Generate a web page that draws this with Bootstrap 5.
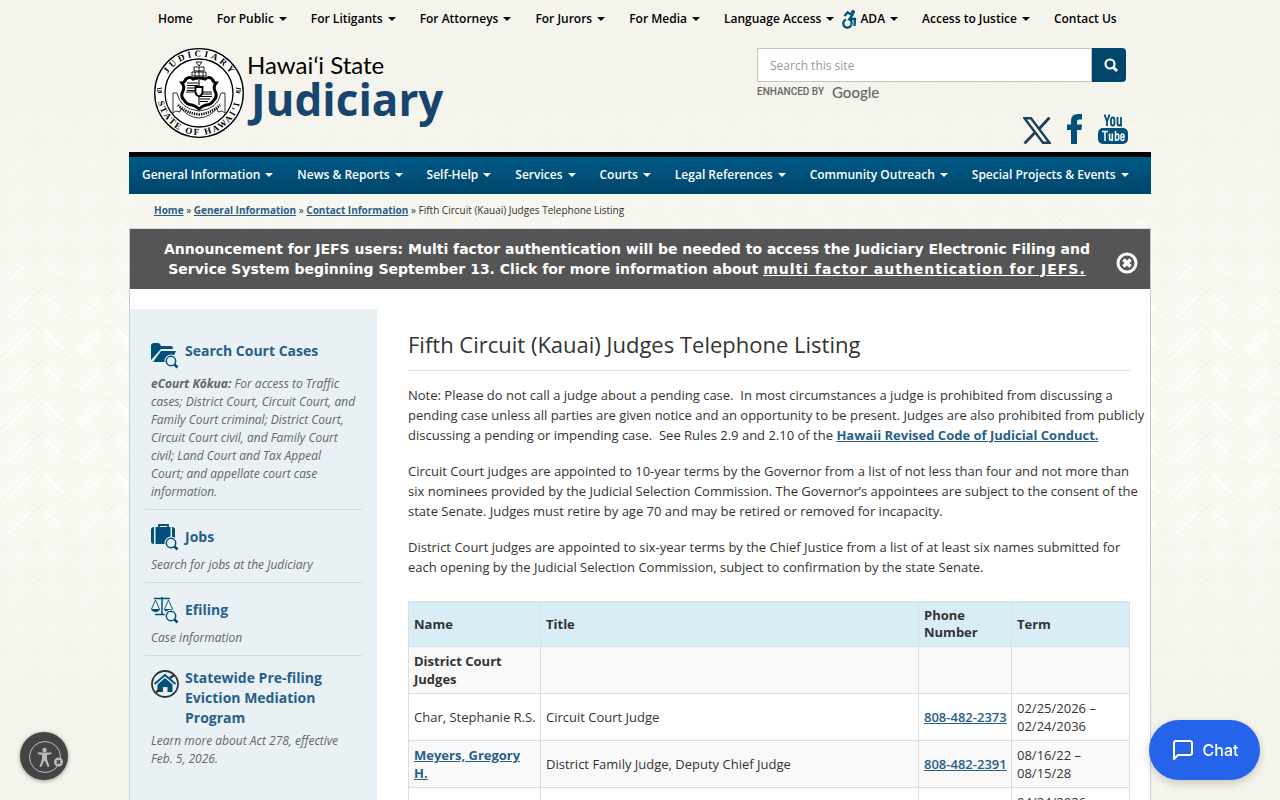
<!DOCTYPE html>
<html lang="en">
<head>
<meta charset="utf-8">
<meta name="viewport" content="width=device-width, initial-scale=1">
<title>Fifth Circuit (Kauai) Judges Telephone Listing</title>
<link href="https://cdn.jsdelivr.net/npm/bootstrap@5.3.0/dist/css/bootstrap.min.css" rel="stylesheet">
<style>
  body { background: #f5f4ec; color: #333; font-family: "Open Sans", sans-serif; font-size: 13px; line-height: 20px; overflow-x: hidden; }
  a { color: #285e8a; }
  .weave { position: absolute; inset: 0 0 auto 0; width: 100%; height: 740px; z-index: -1; }
  .site { max-width: 1022px; }
  .menu-top .nav { padding-left: 17px; }
  .menu-top .nav-link, .menu-main .nav-link { font-size: 12px; font-weight: 600; line-height: 20px; padding: 9px 12px; white-space: nowrap; }
  .menu-top .nav-link { color: #000; }
  .menu-top .with-icon { padding-left: 0; display: flex; gap: 3px; }
  .menu-main { background: linear-gradient(#005a87, #00456a); border-top: 5px solid #000; padding-left: 1px; }
  .menu-main .nav-link { color: #fff; padding: 8px 12px 9px; }
  .dropdown-toggle::after { border-top: 4px solid; border-left: 4px solid transparent; border-right: 4px solid transparent; margin-left: 5px; vertical-align: 2px; }
  .masthead { padding: 0 23px 8px 24px; }
  .logo-link { gap: 2px; padding-top: 9px; }
  .logo-state { font: 400 24px/24px Lato, sans-serif; color: #000; margin-top: 6px; }
  .logo-name { font: 700 44px/44px "Open Sans", sans-serif; color: #17456d; }
  .search-col { width: 371px; padding-top: 10px; }
  .search-col form { padding-right: 2px; }
  .search-col .form-control { height: 34px; font-size: 12px; border: 1px solid #c5c5c0; border-radius: 0; padding: 6px 12px; }
  .search-col .form-control::placeholder { color: #999; }
  .btn-find { width: 34px; height: 34px; background: #00456a; color: #fff; border-radius: 0 4px 4px 0; }
  .enhanced { font: 500 10px/20px Roboto, sans-serif; color: #666; gap: 8px; }
  .enhanced b { font: 500 15px/20px Lato, sans-serif; }
  .social { margin-top: 12px; gap: 16px; }
  .crumbs { font-size: 10px; line-height: 16px; padding: 8px 25px 10px; }
  .crumbs a { font-weight: 700; }
  .panel-main { background: #fff; border: 1px solid #c8ccce; border-top-color: #ddd; }
  .notice { background: #555; color: #fff; font: 700 14px/20px "DejaVu Sans", sans-serif; padding: 10px 12px 10px 8px; }
  .notice a { color: #fff; letter-spacing: 1px; }
  .notice svg { margin-top: 8px; }
  .aside-col { width: 247px; background: #e9f1f5; padding: 20px 15px 40px; }
  .topic { border-bottom: 1px solid #d5dadd; padding: 12px 6px 8px; }
  .topic:last-child { border-bottom: 0; }
  .topic h2 { font-size: 14px; line-height: 20px; font-weight: 700; margin: 0; }
  .topic h2 a { text-decoration: none; }
  .topic p { font-size: 12px; line-height: 18px; font-style: italic; color: #666; margin: 4px 0 0; }
  .topic svg { margin-top: 2px; }
  .article { padding: 19px 20px 20px 31px; }
  .article h1 { font-size: 22px; line-height: 32px; font-weight: 400; padding-bottom: 10px; border-bottom: 1px solid #ddd; margin-bottom: 14px; }
  .article p { margin: 0 -16px 16px 0; }
  .article a { font-weight: 700; }
  .judges { font-size: 13px; line-height: 18px; margin-top: 24px; --bs-table-striped-bg: #f9f9f9; --bs-table-striped-color: #333; border-color: #ddd; table-layout: fixed; }
  .judges > :not(caption) > * > * { padding: 5px; color: #333; }
  .judges > thead > tr > th { background: #d9edf7; line-height: 17px; vertical-align: middle; }
  .judges .tel { font-weight: 600; white-space: nowrap; }
  .w-name { width: 132px; } .w-phone { width: 93px; } .w-term { width: 118px; }
  .btn-access { left: 20px; bottom: 20px; width: 48px; height: 48px; background: #444; box-shadow: 0 1px 4px #0006; }
  .btn-chat { right: 20px; bottom: 20px; height: 60px; width: 111px; background: #2563eb; color: #fff; font: 500 16px/24px Inter, sans-serif; box-shadow: 0 3px 8px #0003; z-index: 5; }
</style>
</head>
<body>
<svg class="weave" aria-hidden="true">
  <defs>
    <linearGradient id="fade" x1="0" y1="0" x2="0" y2="1"><stop offset=".1" stop-color="#000"/><stop offset=".45" stop-color="#fff"/><stop offset=".65" stop-color="#fff"/><stop offset=".96" stop-color="#000"/></linearGradient>
    <mask id="fader"><rect width="100%" height="740" fill="url(#fade)"/></mask>
    <filter id="soft" x="-50%" y="-50%" width="200%" height="200%"><feGaussianBlur stdDeviation="2.500"/></filter>
    <pattern id="plait" width="73" height="36" patternUnits="userSpaceOnUse">
      <rect width="73" height="36" fill="#fbfbf6" opacity=".5"/>
      <g stroke="#fefffc" stroke-width="12" opacity=".75" filter="url(#soft)"><path d="M7 31L28 8M45 5l15 20M7 67L28 44M45 41l15 20M7-5L28-28M45-31l15 20"/></g>
      <g stroke="#e9e8e0" fill="none" opacity=".55"><path d="M-2 36L34 0M2 40L42 0M34 0l36 36M40-3l36 36"/></g>
    </pattern>
  </defs>
  <rect width="100%" height="740" fill="url(#plait)" mask="url(#fader)"/>
</svg>
<div class="site mx-auto">
  <header>
    <nav class="menu-top" aria-label="Audience">
      <ul class="nav flex-lg-nowrap">
        <li class="nav-item"><a class="nav-link" href="#">Home</a></li>
        <li class="nav-item"><a class="nav-link dropdown-toggle" href="#">For Public</a></li>
        <li class="nav-item"><a class="nav-link dropdown-toggle" href="#">For Litigants</a></li>
        <li class="nav-item"><a class="nav-link dropdown-toggle" href="#">For Attorneys</a></li>
        <li class="nav-item"><a class="nav-link dropdown-toggle" href="#">For Jurors</a></li>
        <li class="nav-item"><a class="nav-link dropdown-toggle" href="#">For Media</a></li>
        <li class="nav-item"><a class="nav-link dropdown-toggle pe-2" href="#">Language Access</a></li>
        <li class="nav-item"><a class="nav-link with-icon" href="#"><svg width="15" height="20" viewBox="0 0 15 20" fill="none" stroke="#00507a" stroke-width="2.300"><circle cx="11" cy="3" r="2" fill="#00507a" stroke="none"/><path d="M2.500 7l3-3.500 5 2.500-3 4H13l-.5 7M9.500 15.500A4.200 4.200 0 1 1 4 10.500"/><path d="M7 9.500q3 2 2.500 6"/></svg><span class="dropdown-toggle">ADA</span></a></li>
        <li class="nav-item"><a class="nav-link dropdown-toggle" href="#">Access to Justice</a></li>
        <li class="nav-item"><a class="nav-link" href="#">Contact Us</a></li>
      </ul>
    </nav>
    <div class="masthead d-flex flex-wrap justify-content-between">
      <a class="logo-link d-flex text-decoration-none" href="#">
        <svg width="92" height="92" viewBox="0 0 92 92" role="img" aria-label="Seal">
          <defs><path id="arcTop" d="M9.500 46a36.500 36.500 0 0 1 73 0"/><path id="arcLow" d="M4 46a42 42 0 0 0 84 0"/></defs>
          <circle cx="46" cy="46" r="44.300" fill="#fff" stroke="#000" stroke-width="1.300"/>
          <circle cx="46" cy="46" r="34" fill="#fff" stroke="#000" stroke-width="1.300"/>
          <g font-family="Liberation Serif, serif" font-weight="700" font-size="9" text-anchor="middle" fill="#000">
            <text letter-spacing="3"><textPath href="#arcTop" startOffset="51%">JUDICIARY</textPath></text>
            <text letter-spacing="2"><textPath href="#arcLow" startOffset="50%">STATE OF HAWAI‘I</textPath></text>
          </g>
          <path d="M4 42l5-1M4 44h5M5 46l4-1M83 41l5 1M83 44h5M83 45l4 1" stroke="#000"/>
          <g fill="none" stroke="#000">
            <path d="M43 15h6l-3 4zM41 20h10v4H41zM39 25h14M42 25v6M46 20v11M50 25v6M39 25v4h14v-4" stroke-width=".9"/>
            <path d="M33 32q4-3 7 0 6-2 12 0 4-3 7 0 2 4 4 4-3 4-1 8 3 5-1 9-3 5-8 5-4 1-7 4-3-3-7-4-5 0-8-5-4-4-1-9 2-4-1-8 2 0 4-4z" fill="#fff" stroke-width="3"/>
            <path d="M34 36h11M34 38.500h11M34 41h8M34 43.500h8M47 47h12M47 49.500h12M47 52h10M47 54.500h8M46 33v25M33 45h26" stroke-width="1.100"/>
            <path d="M42.500 40h7v5q0 3-3.500 4.500Q42.500 48 42.500 45z" fill="#fff" stroke-width="1.800"/>
            <path d="M20 46h4q3 16 22 18 19-2 22-18h4v20l-3-2-4 1-1-4Q58 70 46 71 34 70 28 61l-1 4-4-1-3 2z" stroke-width=".8"/>
            <path d="M25 58q8 8 21 9.500Q59 66 67 58" stroke-width="2.600" stroke-dasharray="1.300 1"/>
          </g>
        </svg>
        <span class="d-flex flex-column"><span class="logo-state">Hawaiʻi State</span><span class="logo-name ms-1">Judiciary</span></span>
      </a>
      <div class="search-col">
        <form class="d-flex" role="search" onsubmit="return false">
          <input class="form-control" type="search" placeholder="Search this site" aria-label="Search this site">
          <button class="btn btn-find d-flex align-items-center justify-content-center p-0 ps-1 flex-shrink-0" type="submit" aria-label="Search"><svg width="14" height="14" viewBox="0 0 14 14" fill="none" stroke="currentColor"><circle cx="6" cy="6" r="4.500" stroke-width="2.200"/><path d="M9.500 9.500l3.500 3.500" stroke-width="2.800"/></svg></button>
        </form>
        <div class="enhanced d-flex"><span>ENHANCED BY</span><b>Google</b></div>
        <div class="social d-flex justify-content-end align-items-end">
          <a class="d-flex" href="#" aria-label="X"><svg width="28" height="27" viewBox="0 0 28 27" fill="none" stroke="#1b4257"><path d="M1.500 1.200h6.500l18.500 24.600H20z" stroke-width="2.400"/><path d="M26.500.500L15.500 12.500M12 15.500L1.500 26.500" stroke-width="2.800"/></svg></a>
          <a class="d-flex" href="#" aria-label="Facebook"><svg width="15" height="30" viewBox="0 0 15 30"><path d="M4 30V16H0v-5.500h4V7q0-7 7-7h4v5.500h-3q-2 0-2 2v3h5l-.6 5.500H10v14z" fill="#00507a"/></svg></a>
          <a class="d-flex" href="#" aria-label="YouTube"><svg width="30" height="30" viewBox="0 0 30 30"><rect y="14" width="30" height="16" rx="5" fill="#00507a"/><path d="M6.500.500l2.500 7v4.500M11.500.500L9 7.500M13 5.500q0-2 1.700-2t1.700 2v4q0 2-1.700 2t-1.700-2zM19.500 3v7q0 1.500 1 1.500 1.500 0 2.500-1.500V3v9.500" fill="none" stroke="#00507a" stroke-width="1.800"/><path d="M4 17.500h6M7 17.500V27M11.500 19.500V25q0 1 .8 1 1.200 0 2-1V19.500V27M17.500 17v10M17.500 21q3.200-2 3.200 0v3.700q0 2.200-3.200 1M26 24.500q0 2-1.500 2t-1.500-2V22q0-2 1.500-2T26 22v1.200h-3" fill="none" stroke="#fff" stroke-width="1.500"/></svg></a>
        </div>
      </div>
    </div>
    <nav class="menu-main" aria-label="Main">
      <ul class="nav flex-lg-nowrap">
        <li class="nav-item"><a class="nav-link dropdown-toggle" href="#">General Information</a></li>
        <li class="nav-item"><a class="nav-link dropdown-toggle" href="#">News &amp; Reports</a></li>
        <li class="nav-item"><a class="nav-link dropdown-toggle" href="#">Self-Help</a></li>
        <li class="nav-item"><a class="nav-link dropdown-toggle" href="#">Services</a></li>
        <li class="nav-item"><a class="nav-link dropdown-toggle" href="#">Courts</a></li>
        <li class="nav-item"><a class="nav-link dropdown-toggle" href="#">Legal References</a></li>
        <li class="nav-item"><a class="nav-link dropdown-toggle" href="#">Community Outreach</a></li>
        <li class="nav-item"><a class="nav-link dropdown-toggle" href="#">Special Projects &amp; Events</a></li>
      </ul>
    </nav>
    <nav class="crumbs" aria-label="Breadcrumb"><a href="#">Home</a> » <a href="#">General Information</a> » <a href="#">Contact Information</a> » Fifth Circuit (Kauai) Judges Telephone Listing</nav>
  </header>
  <main class="panel-main">
    <div class="notice d-flex align-items-center">
      <div class="flex-grow-1 text-center">Announcement for JEFS users: Multi factor authentication will be needed to access the Judiciary Electronic Filing and Service System beginning September 13. Click for more information about <a href="#">multi factor authentication for JEFS.</a></div>
      <button class="btn p-0 border-0 lh-1 flex-shrink-0" type="button" aria-label="Close"><svg width="22" height="22" viewBox="0 0 22 22" fill="none" stroke="#fff"><circle cx="11" cy="11" r="9" stroke-width="3"/><path d="M7.500 7.500l7 7M14.500 7.500l-7 7" stroke-width="3.600"/></svg></button>
    </div>
    <div class="d-flex pt-3 mt-1">
      <aside class="aside-col flex-shrink-0">
        <section class="topic">
          <div class="d-flex gap-1">
            <svg class="flex-shrink-0" width="30" height="28" viewBox="0 0 30 28"><path d="M0 3q0-3 3-3h4q2 0 3 3h10q2 0 2 3H10L0 17z" fill="#00507a"/><path d="M10 8h15l-5 11H2z" fill="#00507a"/><circle cx="20" cy="18" r="6.500" fill="#e9f1f5"/><circle cx="20" cy="18" r="4.700" fill="#e9f1f5" stroke="#00507a" stroke-width="1.500"/><path d="M23.500 21.500l3 3" stroke="#00507a" stroke-width="2.500"/></svg>
            <h2><a href="#">Search Court Cases</a></h2>
          </div>
          <p><b>eCourt Kōkua:</b> For access to Traffic cases; District Court, Circuit Court, and Family Court criminal; District Court, Circuit Court civil, and Family Court civil; Land Court and Tax Appeal Court; and appellate court case information.</p>
        </section>
        <section class="topic">
          <div class="d-flex gap-1 align-items-center">
            <svg class="flex-shrink-0" width="30" height="28" viewBox="0 0 30 28"><path d="M3 3v17Q0 20 0 17V6q0-3 3-3zM4.500 3h15v17h-15zM21 3q3 0 3 3v11q0 3-3 3z" fill="#00507a"/><path d="M8 4V1h9v3" fill="none" stroke="#00507a" stroke-width="1.800"/><circle cx="20" cy="19" r="6.500" fill="#e9f1f5"/><circle cx="20" cy="19" r="4.700" fill="#e9f1f5" stroke="#00507a" stroke-width="1.500"/><path d="M23.500 22.500l3 3" stroke="#00507a" stroke-width="2.500"/></svg>
            <h2><a href="#">Jobs</a></h2>
          </div>
          <p>Search for jobs at the Judiciary</p>
        </section>
        <section class="topic">
          <div class="d-flex gap-1 align-items-center">
            <svg class="flex-shrink-0" width="30" height="28" viewBox="0 0 30 28"><g fill="none" stroke="#00507a"><path d="M3 1.500h16M11 0v17M4 17.500h12" stroke-width="1.500"/><path d="M4.500 3L.500 12M4.500 3l4 9M17.500 3l-4 9M17.500 3l4 9" stroke-width=".9"/></g><path d="M0 12h9q-1 3-4.500 3T0 12zM13 12h9q-1 3-4.500 3T13 12z" fill="#00507a"/><circle cx="20" cy="19" r="6.500" fill="#e9f1f5"/><circle cx="20" cy="19" r="4.700" fill="#e9f1f5" stroke="#00507a" stroke-width="1.500"/><path d="M23.500 22.500l3 3" stroke="#00507a" stroke-width="2.500"/></svg>
            <h2><a href="#">Efiling</a></h2>
          </div>
          <p>Case information</p>
        </section>
        <section class="topic">
          <div class="d-flex gap-1">
            <svg class="flex-shrink-0" width="30" height="28" viewBox="0 0 30 28"><circle cx="14" cy="14" r="13" fill="none" stroke="#333" stroke-width="1.800"/><path d="M6.500 14.500L14 8l7.500 6.500V22h-5v-5h-4.500v5h-5.500z" fill="#00507a"/><path d="M3.500 14L14 5l10.500 9" fill="none" stroke="#00507a" stroke-width="2"/><path d="M5 22.500l3-3M19 8l4-3" stroke="#333" stroke-width="2.400"/></svg>
            <h2><a href="#">Statewide Pre-filing Eviction Mediation Program</a></h2>
          </div>
          <p>Learn more about Act 278, effective Feb. 5, 2026.</p>
        </section>
      </aside>
      <article class="article flex-grow-1">
        <h1>Fifth Circuit (Kauai) Judges Telephone Listing</h1>
        <p>Note: Please do not call a judge about a pending case.&nbsp; In most circumstances a judge is prohibited from discussing a pending case unless all parties are given notice and an opportunity to be present. Judges are also prohibited from publicly discussing a pending or impending case.&nbsp; See Rules 2.9 and 2.10 of the <a href="#">Hawaii Revised Code of Judicial Conduct.</a></p>
        <p>Circuit Court judges are appointed to 10-year terms by the Governor from a list of not less than four and not more than six nominees provided by the Judicial Selection Commission. The Governor’s appointees are subject to the consent of the state Senate. Judges must retire by age 70 and may be retired or removed for incapacity.</p>
        <p>District Court judges are appointed to six-year terms by the Chief Justice from a list of at least six names submitted for each opening by the Judicial Selection Commission, subject to confirmation by the state Senate.</p>
        <table class="table table-bordered table-striped align-middle judges">
          <thead><tr><th class="w-name">Name</th><th>Title</th><th class="w-phone">Phone Number</th><th class="w-term">Term</th></tr></thead>
          <tbody>
            <tr><td><b>District Court Judges</b></td><td></td><td></td><td></td></tr>
            <tr><td class="text-nowrap">Char, Stephanie R.S.</td><td>Circuit Court Judge</td><td><a class="tel" href="#">808-482-2373</a></td><td>02/25/2026 –<br>02/24/2036</td></tr>
            <tr><td><a href="#">Meyers, Gregory H.</a></td><td>District Family Judge, Deputy Chief Judge</td><td><a class="tel" href="#">808-482-2391</a></td><td>08/16/22 –<br>08/15/28</td></tr>
            <tr><td></td><td></td><td></td><td>04/24/2026 –<br>04/23/2032</td></tr>
          </tbody>
        </table>
      </article>
    </div>
  </main>
</div>
<button class="btn-access btn rounded-circle position-fixed p-0" type="button" aria-label="Accessibility"><svg class="d-block" width="48" height="48" viewBox="0 0 48 48"><circle cx="24" cy="24" r="15.500" fill="none" stroke="#bbb"/><circle cx="23.500" cy="17" r="2.200" fill="#bbb"/><path d="M16.500 19.500h14v1.500l-4.500 1v4l2.500 7.500-1.800.600L24 28h-1l-2.700 6.100-1.800-.600L21 26v-4l-4.500-1z" fill="#bbb"/><circle cx="37.500" cy="29" r="4.500" fill="#bbb"/><path d="M35.800 27.300l3.400 3.400M39.200 27.300l-3.400 3.400" stroke="#444" stroke-width="1.600"/></svg></button>
<button class="btn-chat btn rounded-pill position-fixed d-flex align-items-center justify-content-center gap-2 p-0 border-0" type="button"><svg width="24" height="24" viewBox="0 0 24 24" fill="none" stroke="currentColor" stroke-width="2" stroke-linejoin="round"><path d="M21 15a2 2 0 0 1-2 2H7l-4 4V5a2 2 0 0 1 2-2h14a2 2 0 0 1 2 2z"/></svg>Chat</button>
<script src="https://cdn.jsdelivr.net/npm/bootstrap@5.3.0/dist/js/bootstrap.bundle.min.js"></script>
</body>
</html>
